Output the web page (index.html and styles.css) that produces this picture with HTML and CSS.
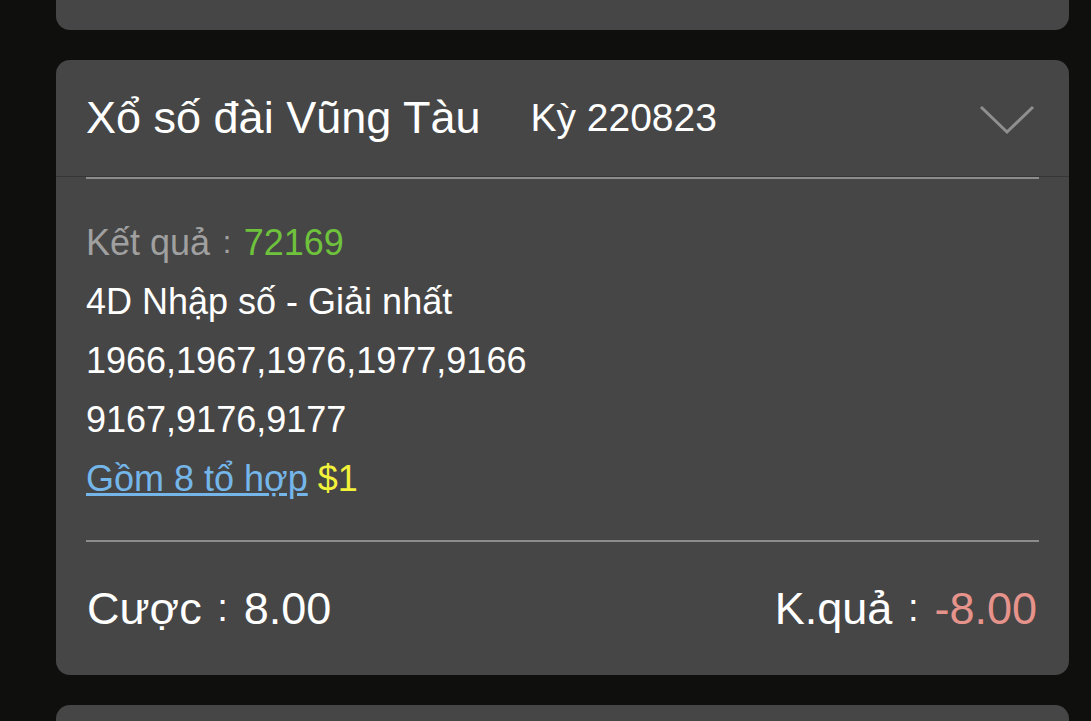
FILE: index.html
```html
<!DOCTYPE html>
<html>
<head>
  <title>Lịch sử cược</title>
  <link rel="stylesheet" href="styles.css">
</head>
<body>
  <div class="list">
    <div class="card card-prev"></div>

    <div class="card">
      <div class="card-head">
        <span class="title">Xổ số đài Vũng Tàu</span>
        <span class="issue">Kỳ 220823</span>
        <svg class="chevron" width="56" height="30" viewBox="0 0 56 30">
          <polyline points="2,2 28,27 54,2" fill="none" stroke="#8f8f8f" stroke-width="3"/>
        </svg>
      </div>

      <div class="card-body">
        <p class="line"><span class="label">Kết quả<span class="colon">:</span></span><span class="win-num">72169</span></p>
        <p class="line">4D Nhập số - Giải nhất</p>
        <p class="line">1966,1967,1976,1977,9166</p>
        <p class="line">9167,9176,9177</p>
        <p class="line"><a href="#" class="combo">Gồm 8 tổ hợp</a> <span class="price">$1</span></p>
      </div>

      <div class="card-foot">
        <span>Cược<span class="colon">:</span>8.00</span>
        <span>K.quả<span class="colon">:</span><span class="loss">-8.00</span></span>
      </div>
    </div>

    <div class="card card-next"></div>
  </div>
</body>
</html>
```

FILE: styles.css
```css
body {
  margin: 0;
  background-color: #0f0f0e;
  font-family: "Liberation Sans", Arial, sans-serif;
  color: #fff;
  overflow: hidden;
}

.list {
  display: flex;
  flex-direction: column;
  gap: 30px;
  margin: -40px 22px 0 56px;
}

.card {
  background-color: #464646;
  border-radius: 14px;
}

.card-prev {
  height: 70px;
}

.card-next {
  height: 16px;
  border-radius: 14px 14px 0 0;
}

.card-head {
  display: flex;
  align-items: center;
  height: 116px;
  padding: 0 30px;
  border-bottom: 1px solid #363636;
}

.title {
  font-size: 45px;
}

.issue {
  font-size: 39px;
  margin-left: 50px;
}

.chevron {
  margin-left: auto;
  margin-right: 4px;
  margin-top: 4px;
}

.card-body {
  margin: 0 30px;
  padding: 34px 0 32px;
  border-top: 2px solid #8c8c8c;
  border-bottom: 2px solid #8c8c8c;
}

.line {
  margin: 0;
  font-size: 36px;
  line-height: 59px;
}

.colon {
  display: inline-block;
  width: 1.1em;
  text-align: center;
  font-size: 0.85em;
  vertical-align: 0.08em;
}

.label {
  color: #a0a0a0;
}

.win-num {
  color: #6fc23c;
}

.combo {
  color: #74b6ea;
  text-decoration: underline;
}

.price {
  color: #f3f23b;
}

.card-foot {
  display: flex;
  justify-content: space-between;
  align-items: center;
  height: 133px;
  padding: 0 32px 0 31px;
  font-size: 45px;
}

.loss {
  color: #e6938c;
}
```
